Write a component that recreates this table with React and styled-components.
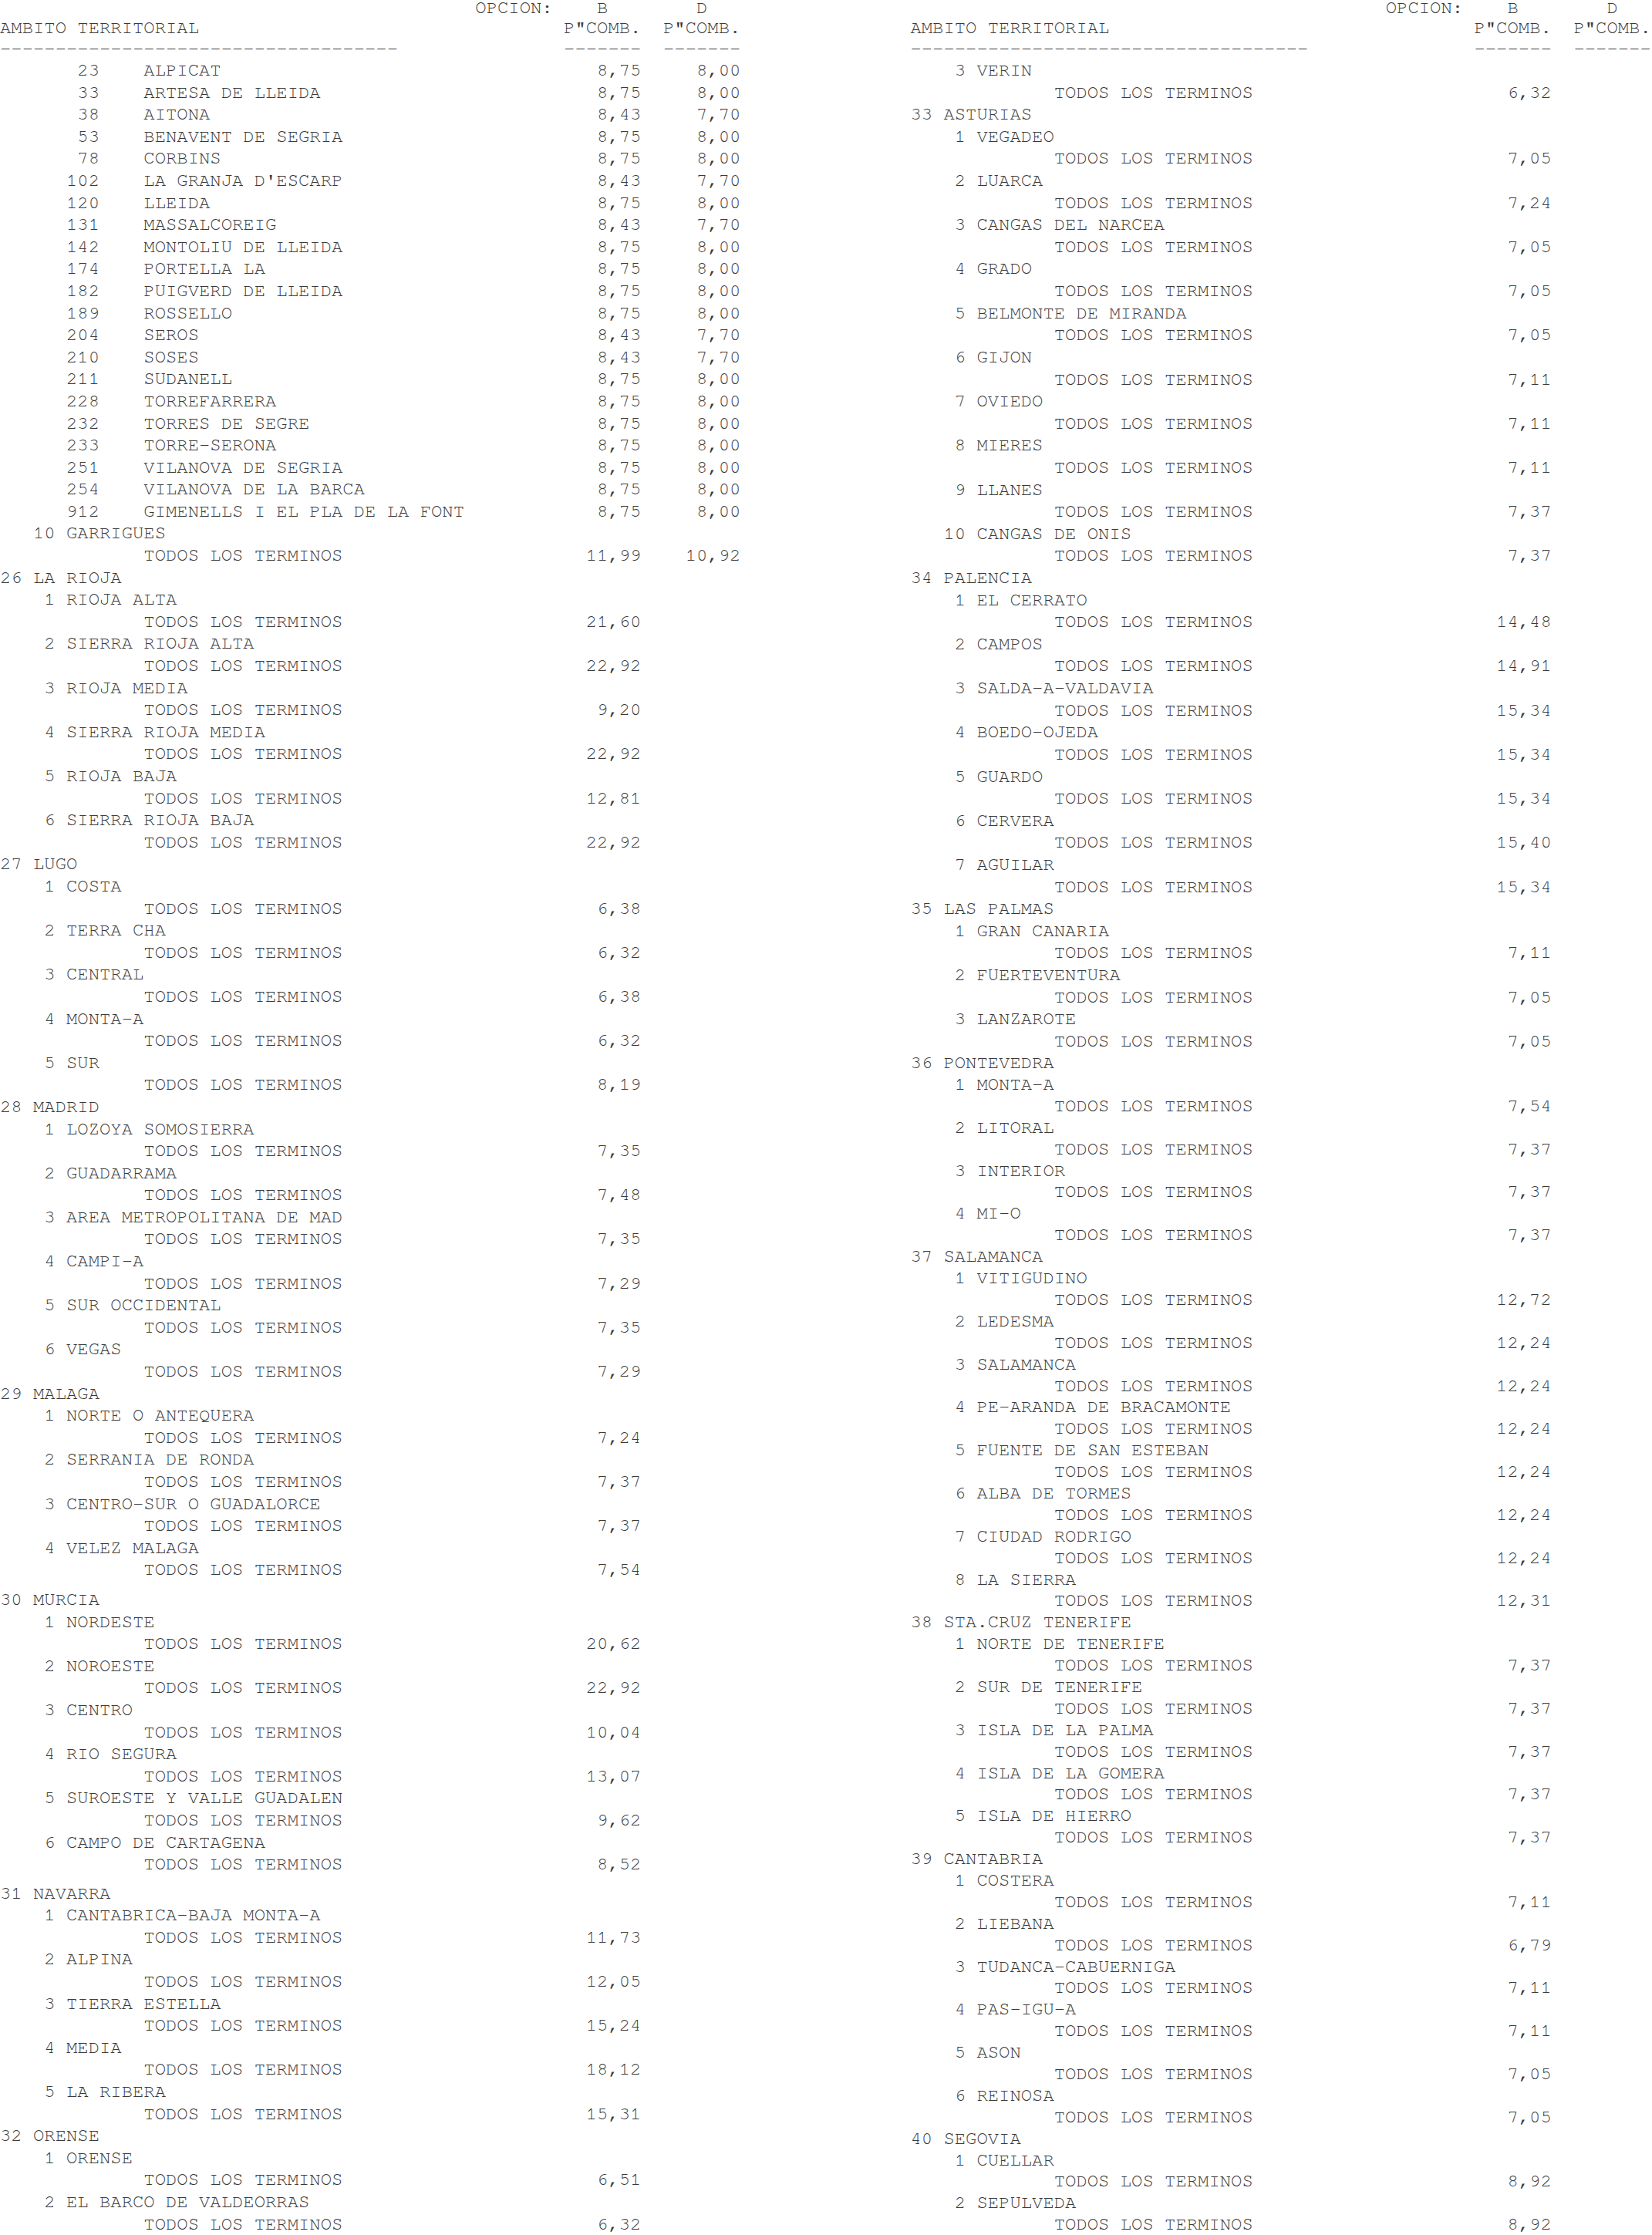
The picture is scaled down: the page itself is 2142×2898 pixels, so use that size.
import React from 'react';
import styled, { createGlobalStyle } from 'styled-components';

const P = (text, gap) => ({ kind: 'prov', text, gap });
const C = (n, text) => ({ kind: 'com', n, text });
const M = (n, text, b, d) => ({ kind: 'mun', n, text, b, d });
const T = (b, d) => ({ kind: 'all', b, d });

const leftRows = [
  M('23', 'ALPICAT', '8,75', '8,00'),
  M('33', 'ARTESA DE LLEIDA', '8,75', '8,00'),
  M('38', 'AITONA', '8,43', '7,70'),
  M('53', 'BENAVENT DE SEGRIA', '8,75', '8,00'),
  M('78', 'CORBINS', '8,75', '8,00'),
  M('102', "LA GRANJA D'ESCARP", '8,43', '7,70'),
  M('120', 'LLEIDA', '8,75', '8,00'),
  M('131', 'MASSALCOREIG', '8,43', '7,70'),
  M('142', 'MONTOLIU DE LLEIDA', '8,75', '8,00'),
  M('174', 'PORTELLA LA', '8,75', '8,00'),
  M('182', 'PUIGVERD DE LLEIDA', '8,75', '8,00'),
  M('189', 'ROSSELLO', '8,75', '8,00'),
  M('204', 'SEROS', '8,43', '7,70'),
  M('210', 'SOSES', '8,43', '7,70'),
  M('211', 'SUDANELL', '8,75', '8,00'),
  M('228', 'TORREFARRERA', '8,75', '8,00'),
  M('232', 'TORRES DE SEGRE', '8,75', '8,00'),
  M('233', 'TORRE-SERONA', '8,75', '8,00'),
  M('251', 'VILANOVA DE SEGRIA', '8,75', '8,00'),
  M('254', 'VILANOVA DE LA BARCA', '8,75', '8,00'),
  M('912', 'GIMENELLS I EL PLA DE LA FONT', '8,75', '8,00'),
  C('10', 'GARRIGUES'), T('11,99', '10,92'),
  P('26 LA RIOJA'),
  C('1', 'RIOJA ALTA'), T('21,60'),
  C('2', 'SIERRA RIOJA ALTA'), T('22,92'),
  C('3', 'RIOJA MEDIA'), T('9,20'),
  C('4', 'SIERRA RIOJA MEDIA'), T('22,92'),
  C('5', 'RIOJA BAJA'), T('12,81'),
  C('6', 'SIERRA RIOJA BAJA'), T('22,92'),
  P('27 LUGO'),
  C('1', 'COSTA'), T('6,38'),
  C('2', 'TERRA CHA'), T('6,32'),
  C('3', 'CENTRAL'), T('6,38'),
  C('4', 'MONTA-A'), T('6,32'),
  C('5', 'SUR'), T('8,19'),
  P('28 MADRID'),
  C('1', 'LOZOYA SOMOSIERRA'), T('7,35'),
  C('2', 'GUADARRAMA'), T('7,48'),
  C('3', 'AREA METROPOLITANA DE MAD'), T('7,35'),
  C('4', 'CAMPI-A'), T('7,29'),
  C('5', 'SUR OCCIDENTAL'), T('7,35'),
  C('6', 'VEGAS'), T('7,29'),
  P('29 MALAGA'),
  C('1', 'NORTE O ANTEQUERA'), T('7,24'),
  C('2', 'SERRANIA DE RONDA'), T('7,37'),
  C('3', 'CENTRO-SUR O GUADALORCE'), T('7,37'),
  C('4', 'VELEZ MALAGA'), T('7,54'),
  P('30 MURCIA', 10),
  C('1', 'NORDESTE'), T('20,62'),
  C('2', 'NOROESTE'), T('22,92'),
  C('3', 'CENTRO'), T('10,04'),
  C('4', 'RIO SEGURA'), T('13,07'),
  C('5', 'SUROESTE Y VALLE GUADALEN'), T('9,62'),
  C('6', 'CAMPO DE CARTAGENA'), T('8,52'),
  P('31 NAVARRA', 9),
  C('1', 'CANTABRICA-BAJA MONTA-A'), T('11,73'),
  C('2', 'ALPINA'), T('12,05'),
  C('3', 'TIERRA ESTELLA'), T('15,24'),
  C('4', 'MEDIA'), T('18,12'),
  C('5', 'LA RIBERA'), T('15,31'),
  P('32 ORENSE'),
  C('1', 'ORENSE'), T('6,51'),
  C('2', 'EL BARCO DE VALDEORRAS'), T('6,32'),
];

const rightRows = [
  C('3', 'VERIN'), T('6,32'),
  P('33 ASTURIAS'),
  C('1', 'VEGADEO'), T('7,05'),
  C('2', 'LUARCA'), T('7,24'),
  C('3', 'CANGAS DEL NARCEA'), T('7,05'),
  C('4', 'GRADO'), T('7,05'),
  C('5', 'BELMONTE DE MIRANDA'), T('7,05'),
  C('6', 'GIJON'), T('7,11'),
  C('7', 'OVIEDO'), T('7,11'),
  C('8', 'MIERES'), T('7,11'),
  C('9', 'LLANES'), T('7,37'),
  C('10', 'CANGAS DE ONIS'), T('7,37'),
  P('34 PALENCIA'),
  C('1', 'EL CERRATO'), T('14,48'),
  C('2', 'CAMPOS'), T('14,91'),
  C('3', 'SALDA-A-VALDAVIA'), T('15,34'),
  C('4', 'BOEDO-OJEDA'), T('15,34'),
  C('5', 'GUARDO'), T('15,34'),
  C('6', 'CERVERA'), T('15,40'),
  C('7', 'AGUILAR'), T('15,34'),
  P('35 LAS PALMAS'),
  C('1', 'GRAN CANARIA'), T('7,11'),
  C('2', 'FUERTEVENTURA'), T('7,05'),
  C('3', 'LANZAROTE'), T('7,05'),
  P('36 PONTEVEDRA'),
  C('1', 'MONTA-A'), T('7,54'),
  C('2', 'LITORAL'), T('7,37'),
  C('3', 'INTERIOR'), T('7,37'),
  C('4', 'MI-O'), T('7,37'),
  P('37 SALAMANCA'),
  C('1', 'VITIGUDINO'), T('12,72'),
  C('2', 'LEDESMA'), T('12,24'),
  C('3', 'SALAMANCA'), T('12,24'),
  C('4', 'PE-ARANDA DE BRACAMONTE'), T('12,24'),
  C('5', 'FUENTE DE SAN ESTEBAN'), T('12,24'),
  C('6', 'ALBA DE TORMES'), T('12,24'),
  C('7', 'CIUDAD RODRIGO'), T('12,24'),
  C('8', 'LA SIERRA'), T('12,31'),
  P('38 STA.CRUZ TENERIFE'),
  C('1', 'NORTE DE TENERIFE'), T('7,37'),
  C('2', 'SUR DE TENERIFE'), T('7,37'),
  C('3', 'ISLA DE LA PALMA'), T('7,37'),
  C('4', 'ISLA DE LA GOMERA'), T('7,37'),
  C('5', 'ISLA DE HIERRO'), T('7,37'),
  P('39 CANTABRIA'),
  C('1', 'COSTERA'), T('7,11'),
  C('2', 'LIEBANA'), T('6,79'),
  C('3', 'TUDANCA-CABUERNIGA'), T('7,11'),
  C('4', 'PAS-IGU-A'), T('7,11'),
  C('5', 'ASON'), T('7,05'),
  C('6', 'REINOSA'), T('7,05'),
  P('40 SEGOVIA'),
  C('1', 'CUELLAR'), T('8,92'),
  C('2', 'SEPULVEDA'), T('8,92'),
];

// the scanned right page packs its lines a little tighter from PONTEVEDRA on
const leftHeight = () => 28.6;
const rightHeight = (i) => (i < 46 ? 28.62 : 27.9);

function Listing({ rows, rowHeight }) {
  return (
    <Column>
      <HeadRow $first>
        <HeadLabel $right>OPCION: </HeadLabel>
        <HeadCell>B</HeadCell>
        <span />
        <HeadCell>D</HeadCell>
      </HeadRow>
      <HeadRow>
        <HeadLabel>AMBITO TERRITORIAL</HeadLabel>
        <HeadCell>P"COMB.</HeadCell>
        <span />
        <HeadCell>P"COMB.</HeadCell>
      </HeadRow>
      <HeadRow>
        <HeadLabel>{'-'.repeat(36)}</HeadLabel>
        <HeadCell>-------</HeadCell>
        <span />
        <HeadCell>-------</HeadCell>
      </HeadRow>

      {rows.map((row, i) => {
        const h = rowHeight(i);
        if (row.kind === 'prov') {
          return (
            <Line key={i} $h={h} $gap={row.gap}>
              {row.text}
            </Line>
          );
        }
        if (row.kind === 'com') {
          return (
            <Line key={i} $h={h}>
              <ComNum>{row.n}</ComNum>
              <ComName>{row.text}</ComName>
            </Line>
          );
        }
        return (
          <Row key={i} $h={h}>
            <Num>{row.kind === 'mun' ? row.n : ''}</Num>
            <span />
            <Name>{row.kind === 'mun' ? row.text : 'TODOS LOS TERMINOS'}</Name>
            <Value>{row.b}</Value>
            <Value>{row.d || ''}</Value>
          </Row>
        );
      })}
    </Column>
  );
}

export default function App() {
  return (
    <>
      <GlobalStyle />
      <Sheet>
        <Listing rows={leftRows} rowHeight={leftHeight} />
        <Listing rows={rightRows} rowHeight={rightHeight} />
      </Sheet>
    </>
  );
}

const GlobalStyle = createGlobalStyle`
  html, body {
    margin: 0;
    padding: 0;
    background: #ffffff;
    overflow: hidden;
  }
`;

const Sheet = styled.div`
  display: flex;
  gap: 220px;
  width: 2142px;
  height: 2898px;
  overflow: hidden;
  font-family: 'Nimbus Mono PS', 'Nimbus Mono L', 'FreeMono', 'Liberation Mono', monospace;
  font-size: 23.9px;
  color: #3a3a3a;
`;

const Column = styled.div`
  flex: none;
  width: 67ch;
`;

const HeadRow = styled.div`
  display: grid;
  grid-template-columns: 51ch 7ch 2ch 7ch;
  height: ${(p) => (p.$first ? 21 : 27)}px;
  line-height: ${(p) => (p.$first ? 21 : 27)}px;
  margin-top: ${(p) => (p.$first ? 0 : 0)}px;
  white-space: pre;
  ${(p) => p.$first && 'padding-top: 0; margin-bottom: 2px;'}
`;

const HeadLabel = styled.span`
  text-align: ${(p) => (p.$right ? 'right' : 'left')};
`;

const HeadCell = styled.span`
  text-align: center;
`;

const Line = styled.div`
  display: flex;
  height: ${(p) => p.$h}px;
  line-height: ${(p) => p.$h}px;
  margin-top: ${(p) => p.$gap || 0}px;
  white-space: pre;
`;

const ComNum = styled.span`
  width: 5ch;
  text-align: right;
`;

const ComName = styled.span`
  margin-left: 1ch;
`;

const Row = styled.div`
  display: grid;
  grid-template-columns: 9ch 4ch 38ch 7ch 9ch;
  height: ${(p) => p.$h}px;
  line-height: ${(p) => p.$h}px;
  white-space: pre;
`;

const Num = styled.span`
  text-align: right;
`;

const Name = styled.span`
  overflow: visible;
`;

const Value = styled.span`
  text-align: right;
`;
